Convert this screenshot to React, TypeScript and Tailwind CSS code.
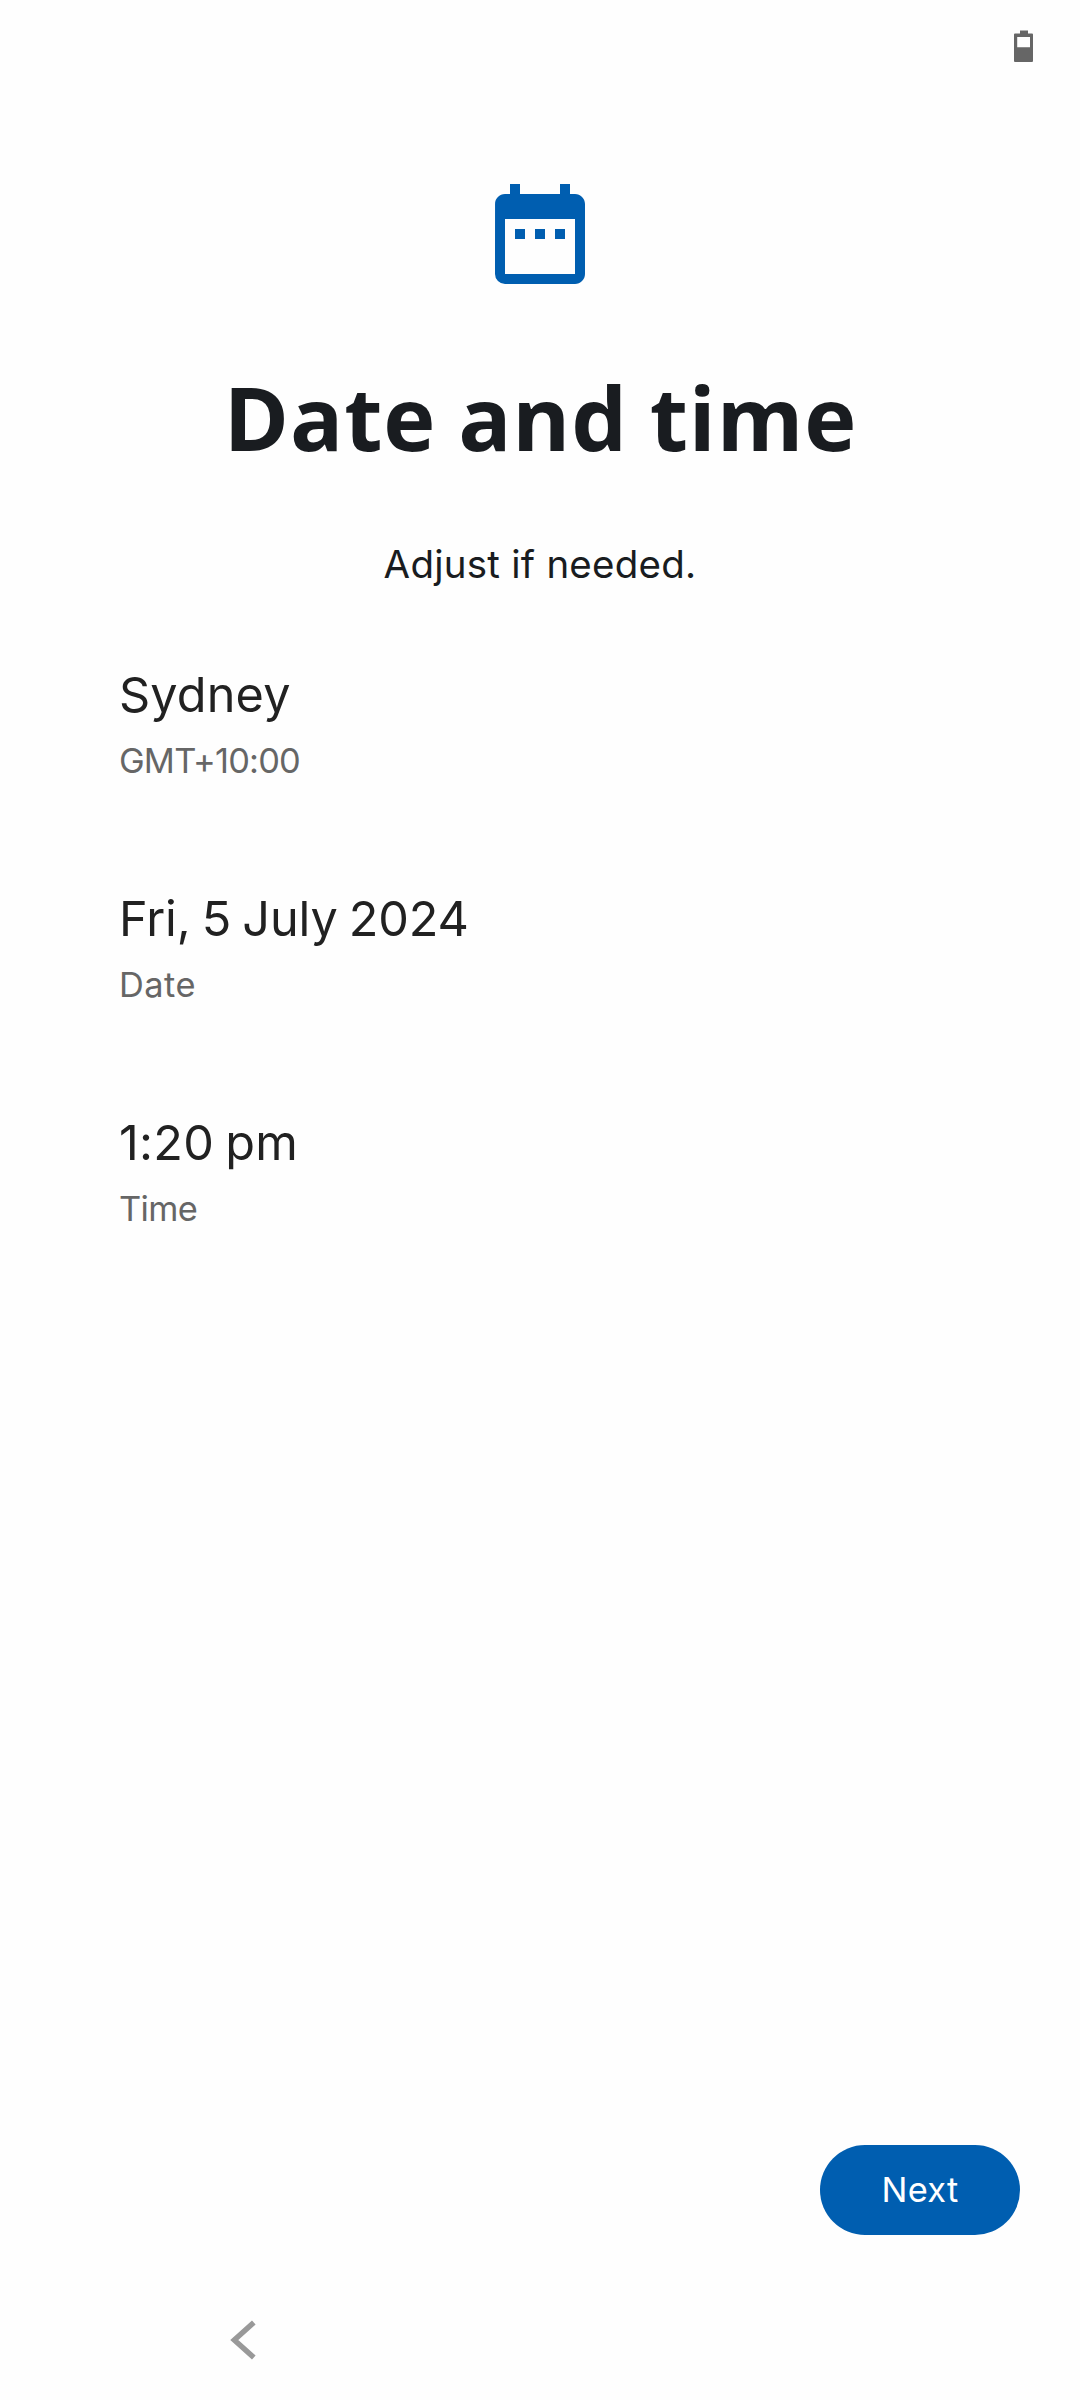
import { MdDateRange } from "react-icons/md"

const BatteryIcon = () => (
  <svg width="20" height="32" viewBox="0 0 20 32" fill="#666666">
    <path
      fillRule="evenodd"
      d="M6 0.5h8v3h4a1 1 0 0 1 1 1v26.5a1 1 0 0 1-1 1h-17a1 1 0 0 1-1-1v-26.5a1 1 0 0 1 1-1h5zM3.2 7v10.3h12.8V7z"
    />
  </svg>
)

const BackIcon = () => (
  <svg width="26" height="40" viewBox="0 0 26 40" fill="none" stroke="#999999" strokeWidth="5.4">
    <path d="M23.8 2.5L4.3 20l19.5 17.5" />
  </svg>
)

const settings = [
  { title: "Sydney", summary: "GMT+10:00", titleClass: "tracking-[0.15px]", summaryClass: "tracking-[-0.79px]" },
  {
    title: "Fri, 5 July 2024",
    summary: "Date",
    titleClass: "tracking-[-0.1px] [word-spacing:-2.5px]",
    summaryClass: "tracking-[0.49px]",
  },
  {
    title: "1:20 pm",
    summary: "Time",
    titleClass: "tracking-[0.3px] [word-spacing:-3px]",
    summaryClass: "tracking-[-0.6px]",
  },
]

export default function App() {
  return (
    <div className="flex h-[2400px] w-[1080px] flex-col bg-[#fefefe] font-['Inter',sans-serif]">
      {/* Status bar */}
      <div className="flex h-[90px] items-start justify-end pt-[30px] pr-[46px]">
        <BatteryIcon />
      </div>

      <header className="flex flex-col items-center pt-[84px] text-[#191c20]">
        <MdDateRange size={120} color="#005eb0" />
        <h1 className="mt-[63px] pl-px font-['Open_Sans',sans-serif] text-[88.2px] leading-[120px] font-bold tracking-[0.9px] whitespace-nowrap [word-spacing:-2px]">
          Date and time
        </h1>
        <p className="mt-[59px] text-[38.5px] leading-14 tracking-[0.24px]">Adjust if needed.</p>
      </header>

      <main className="mt-[70px] flex flex-1 flex-col gap-[102px] px-[119px]">
        {settings.map((item) => (
          <button key={item.title} className="flex flex-col items-start gap-2.5 text-left">
            <span className={`text-[48.6px] leading-[66px] text-[#212121] ${item.titleClass}`}>{item.title}</span>
            <span className={`text-[34.4px] leading-[46px] text-[#666666] ${item.summaryClass}`}>{item.summary}</span>
          </button>
        ))}
      </main>

      <footer className="flex justify-end pr-[60px]">
        <button className="h-[90px] w-[200px] rounded-full bg-[#005eb0] text-[34.4px] tracking-[0.3px] text-white">
          Next
        </button>
      </footer>

      {/* System navigation */}
      <nav className="flex h-[165px] items-start pt-[85px] pl-[230px]">
        <BackIcon />
      </nav>
    </div>
  )
}
